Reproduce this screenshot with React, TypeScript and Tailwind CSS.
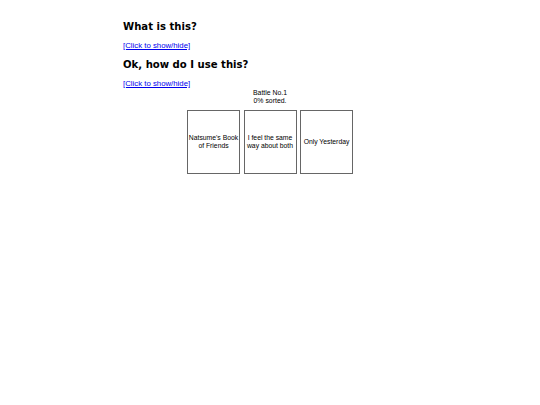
import React from "react";

const choices = [
  { label: "Natsume's Book of Friends" },
  { label: "I feel the same way about both" },
  { label: "Only Yesterday" },
];

function Section({ title }: { title: string }) {
  return (
    <div>
      <h3 className="font-['DejaVu_Sans',sans-serif] font-bold text-[10.1px] leading-[12px] text-black">
        {title}
      </h3>
      <a
        href="#"
        onClick={(e) => e.preventDefault()}
        className="block w-fit mt-[8px] font-['Liberation_Sans',Arial,sans-serif] text-[7.8px] leading-[10px] text-[#0000ee] underline"
      >
        [Click to show/hide]
      </a>
    </div>
  );
}

export default function App() {
  return (
    <div className="min-h-[405px] w-full bg-white">
      <div className="mx-auto w-[294px] pt-[21px]">
        <Section title="What is this?" />
        <div className="mt-[8px]">
          <Section title="Ok, how do I use this?" />
        </div>

        <div className="text-center font-['Liberation_Sans',Arial,sans-serif] text-[6.9px] leading-[7.5px] text-black">
          <div>Battle No.1</div>
          <div>0% sorted.</div>
        </div>

        <div className="mt-[6px] flex justify-center gap-[3.5px]">
          {choices.map((c) => (
            <div
              key={c.label}
              className="flex h-[64px] w-[53px] items-center justify-center border-[0.75px] border-[#666] text-center font-['Liberation_Sans',Arial,sans-serif] text-[6.8px] leading-[7.8px] text-black"
            >
              {c.label}
            </div>
          ))}
        </div>
      </div>
    </div>
  );
}
